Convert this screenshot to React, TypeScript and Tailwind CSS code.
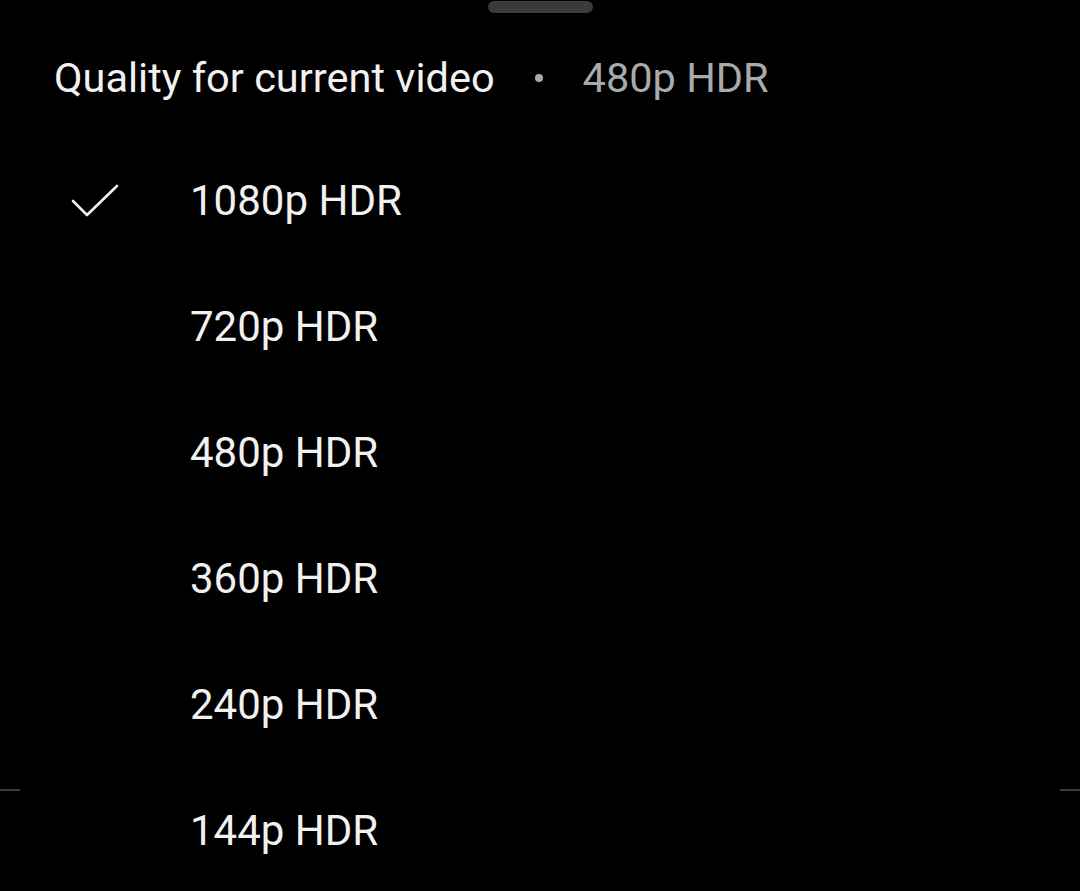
import React from "react";

const QUALITIES = ["1080p HDR", "720p HDR", "480p HDR", "360p HDR", "240p HDR", "144p HDR"];

export default function App() {
  const selected = "1080p HDR";

  return (
    <div
      className="relative h-[891px] w-[1080px] overflow-hidden bg-black text-[#f1f1f1]"
      style={{ fontFamily: "Roboto, 'Noto Sans', sans-serif" }}
    >
      {/* drag handle */}
      <div className="flex justify-center pt-[1px]">
        <div className="h-[12px] w-[105px] rounded-full bg-[#3b3b3b]" />
      </div>

      {/* header */}
      <div className="flex h-[125px] items-center pl-[54px] pt-[5px] text-[41.5px] leading-none">
        <span>Quality for current video</span>
        <span className="mx-[40px] h-[8px] w-[8px] rounded-full bg-[#aaaaaa]" />
        <span className="text-[#aaaaaa]">480p HDR</span>
      </div>

      {/* options */}
      <ul className="flex flex-col">
        {QUALITIES.map((q) => (
          <li key={q} className="flex h-[126px] items-center">
            <div className="flex w-[190px] justify-start pl-[71px]">
              {q === selected && (
                <svg width="48" height="34" viewBox="0 0 48 34" fill="none">
                  <path
                    d="M2 17 L16 31 L46 2"
                    stroke="#f1f1f1"
                    strokeWidth="2.6"
                    strokeLinecap="round"
                    strokeLinejoin="round"
                  />
                </svg>
              )}
            </div>
            <span className="text-[42px] leading-none">{q}</span>
          </li>
        ))}
      </ul>

      {/* edge ticks */}
      <div className="absolute left-0 top-[789px] h-[2px] w-[20px] bg-[#3b3b3b]" />
      <div className="absolute right-0 top-[789px] h-[2px] w-[20px] bg-[#3b3b3b]" />
    </div>
  );
}
